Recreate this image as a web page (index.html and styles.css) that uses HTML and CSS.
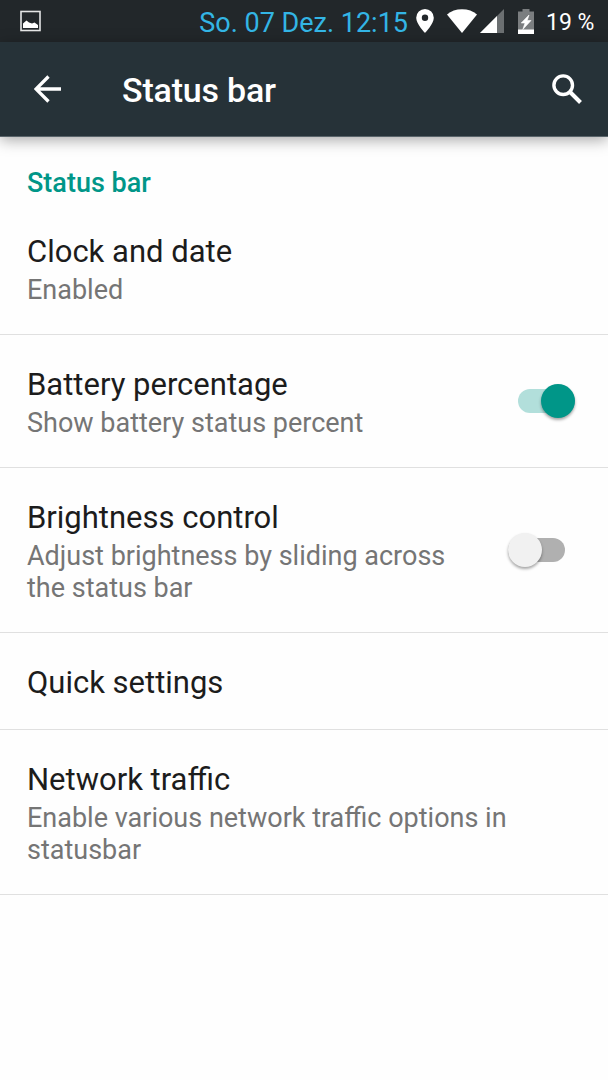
FILE: index.html
```html
<!DOCTYPE html>
<html lang="en">

<head>
    <meta charset="UTF-8">
    <meta name="viewport" content="width=device-width, initial-scale=1.0">
    <title>Status bar</title>
    <link rel="stylesheet" href="styles.css">
</head>

<body>
    <div class="system-bar">
        <svg class="icon-picture" width="22" height="22" viewBox="0 0 22 22">
            <rect x="1" y="1.500" width="19" height="19" fill="none" stroke="#e4e5e5" stroke-width="1.600" />
            <path d="M3 18v-4.500l3.500-3 2.500 2 3 1 2.500-1 3.500 2.500v3z" fill="#fff" />
        </svg>
        <span class="clock">So. 07 Dez. 12:15</span>
        <svg class="icon-location" width="18" height="24" viewBox="0 0 18 24">
            <path d="M9 0a8.800 8.800 0 0 0-8.800 8.800C.2 15.200 9 24 9 24s8.800-8.800 8.800-15.200A8.800 8.800 0 0 0 9 0zm0 12a3.200 3.200 0 1 1 0-6.400A3.200 3.200 0 0 1 9 12z" fill="#fff" />
        </svg>
        <svg class="icon-wifi" width="30" height="24" viewBox="0 0 30 24">
            <path d="M15 24L0 5.500Q6 .2 15 .2T30 5.500z" fill="#fff" />
        </svg>
        <svg class="icon-signal" width="24" height="24" viewBox="0 0 24 24">
            <path d="M0 24L24 0v24z" fill="#6b6f71" />
            <path d="M0 24L17 7v17z" fill="#fff" />
        </svg>
        <svg class="icon-battery" width="16" height="25" viewBox="0 0 16 25">
            <path d="M0 2.500h4.500V0h7v2.500H16V25H0z" fill="#7b7e80" />
            <path d="M0 20.500h16V25H0z" fill="#fff" />
            <path d="M11 6L3.200 14h3.800L4.800 20.500l8.200-9H9.200z" fill="#fff" stroke="#fff" stroke-width="0.600" />
        </svg>
        <span class="battery-level">19 %</span>
    </div>

    <header class="app-bar">
        <svg class="icon-back" width="28" height="28" viewBox="0 0 28 28">
            <path d="M27 14H2M14.500 1.500L2 14l12.500 12.500" fill="none" stroke="#fff" stroke-width="3.300" />
        </svg>
        <h1>Status bar</h1>
        <svg class="icon-search" width="30" height="30" viewBox="0 0 30 30">
            <circle cx="11.200" cy="11.200" r="9.300" fill="none" stroke="#fff" stroke-width="3.400" />
            <path d="M18 18l10.500 10.500" stroke="#fff" stroke-width="4" />
        </svg>
    </header>

    <main class="settings">
        <h2>Status bar</h2>
        <div class="item">
            <div class="text">
                <p class="title">Clock and date</p>
                <p class="summary">Enabled</p>
            </div>
        </div>
        <div class="item">
            <div class="text">
                <p class="title">Battery percentage</p>
                <p class="summary">Show battery status percent</p>
            </div>
            <div class="switch on"><span class="thumb"></span></div>
        </div>
        <div class="item">
            <div class="text">
                <p class="title">Brightness control</p>
                <p class="summary">Adjust brightness by sliding across<br>the status bar</p>
            </div>
            <div class="switch"><span class="thumb"></span></div>
        </div>
        <div class="item">
            <div class="text">
                <p class="title">Quick settings</p>
            </div>
        </div>
        <div class="item">
            <div class="text">
                <p class="title">Network traffic</p>
                <p class="summary">Enable various network traffic options in<br>statusbar</p>
            </div>
        </div>
    </main>
</body>

</html>
```
FILE: styles.css
```css
* {
    margin: 0;
    padding: 0;
    box-sizing: border-box;
}

body {
    height: 1080px;
    background-color: #fefefe;
    font-family: Roboto, sans-serif;
    overflow: hidden;
}

svg {
    display: block;
    flex: none;
}

.system-bar {
    height: 42px;
    display: flex;
    align-items: center;
    padding: 0 14px 0 20px;
    background-color: #22272a;
    color: #fff;
    white-space: nowrap;
}

.clock {
    margin-left: auto;
    color: #33b5e5;
    font-size: 27px;
    line-height: 40px;
    padding-top: 4px;
}

.icon-location {
    margin-left: 8px;
}

.icon-wifi {
    margin-left: 13px;
}

.icon-signal {
    margin-left: 3px;
}

.icon-battery {
    margin-left: 14px;
}

.battery-level {
    width: 48px;
    margin-left: 12px;
    font-size: 23px;
    line-height: 40px;
    padding-top: 4px;
}

.app-bar {
    height: 95px;
    display: flex;
    align-items: center;
    padding: 0 26px 0 34px;
    background-color: #263238;
    border-bottom: 1px solid #59646a;
    box-shadow: 0 3px 14px rgba(0, 0, 0, 0.35);
}

.app-bar h1 {
    flex: 1;
    margin-left: 60px;
    padding-top: 2px;
    color: #fff;
    font-size: 34px;
    font-weight: 500;
    letter-spacing: -0.2px;
}

.settings h2 {
    height: 65px;
    padding: 30px 27px 0;
    color: #009688;
    font-size: 27px;
    font-weight: 500;
    line-height: 32px;
}

.item {
    display: flex;
    align-items: center;
    padding: 31px 33px 28px 27px;
    border-bottom: 1px solid #e0e0e0;
}

.text {
    flex: 1;
    white-space: nowrap;
}

.title {
    color: #1c1c1c;
    font-size: 31px;
    line-height: 37px;
}

.summary {
    color: #757575;
    font-size: 27px;
    line-height: 32px;
    padding-top: 4px;
}

.switch {
    width: 57px;
    height: 24px;
    display: flex;
    align-items: center;
    margin: 0 10px 4px 0;
    border-radius: 12px;
    background-color: #b0b0b0;
}

.thumb {
    width: 34px;
    height: 34px;
    flex: none;
    border-radius: 50%;
    background-color: #f1f1f1;
    box-shadow: 0 2px 3px rgba(0, 0, 0, 0.35);
}

.switch.on {
    justify-content: flex-end;
    margin-right: 0;
    background-color: #b2dfdb;
}

.switch.on .thumb {
    background-color: #009688;
}
```
